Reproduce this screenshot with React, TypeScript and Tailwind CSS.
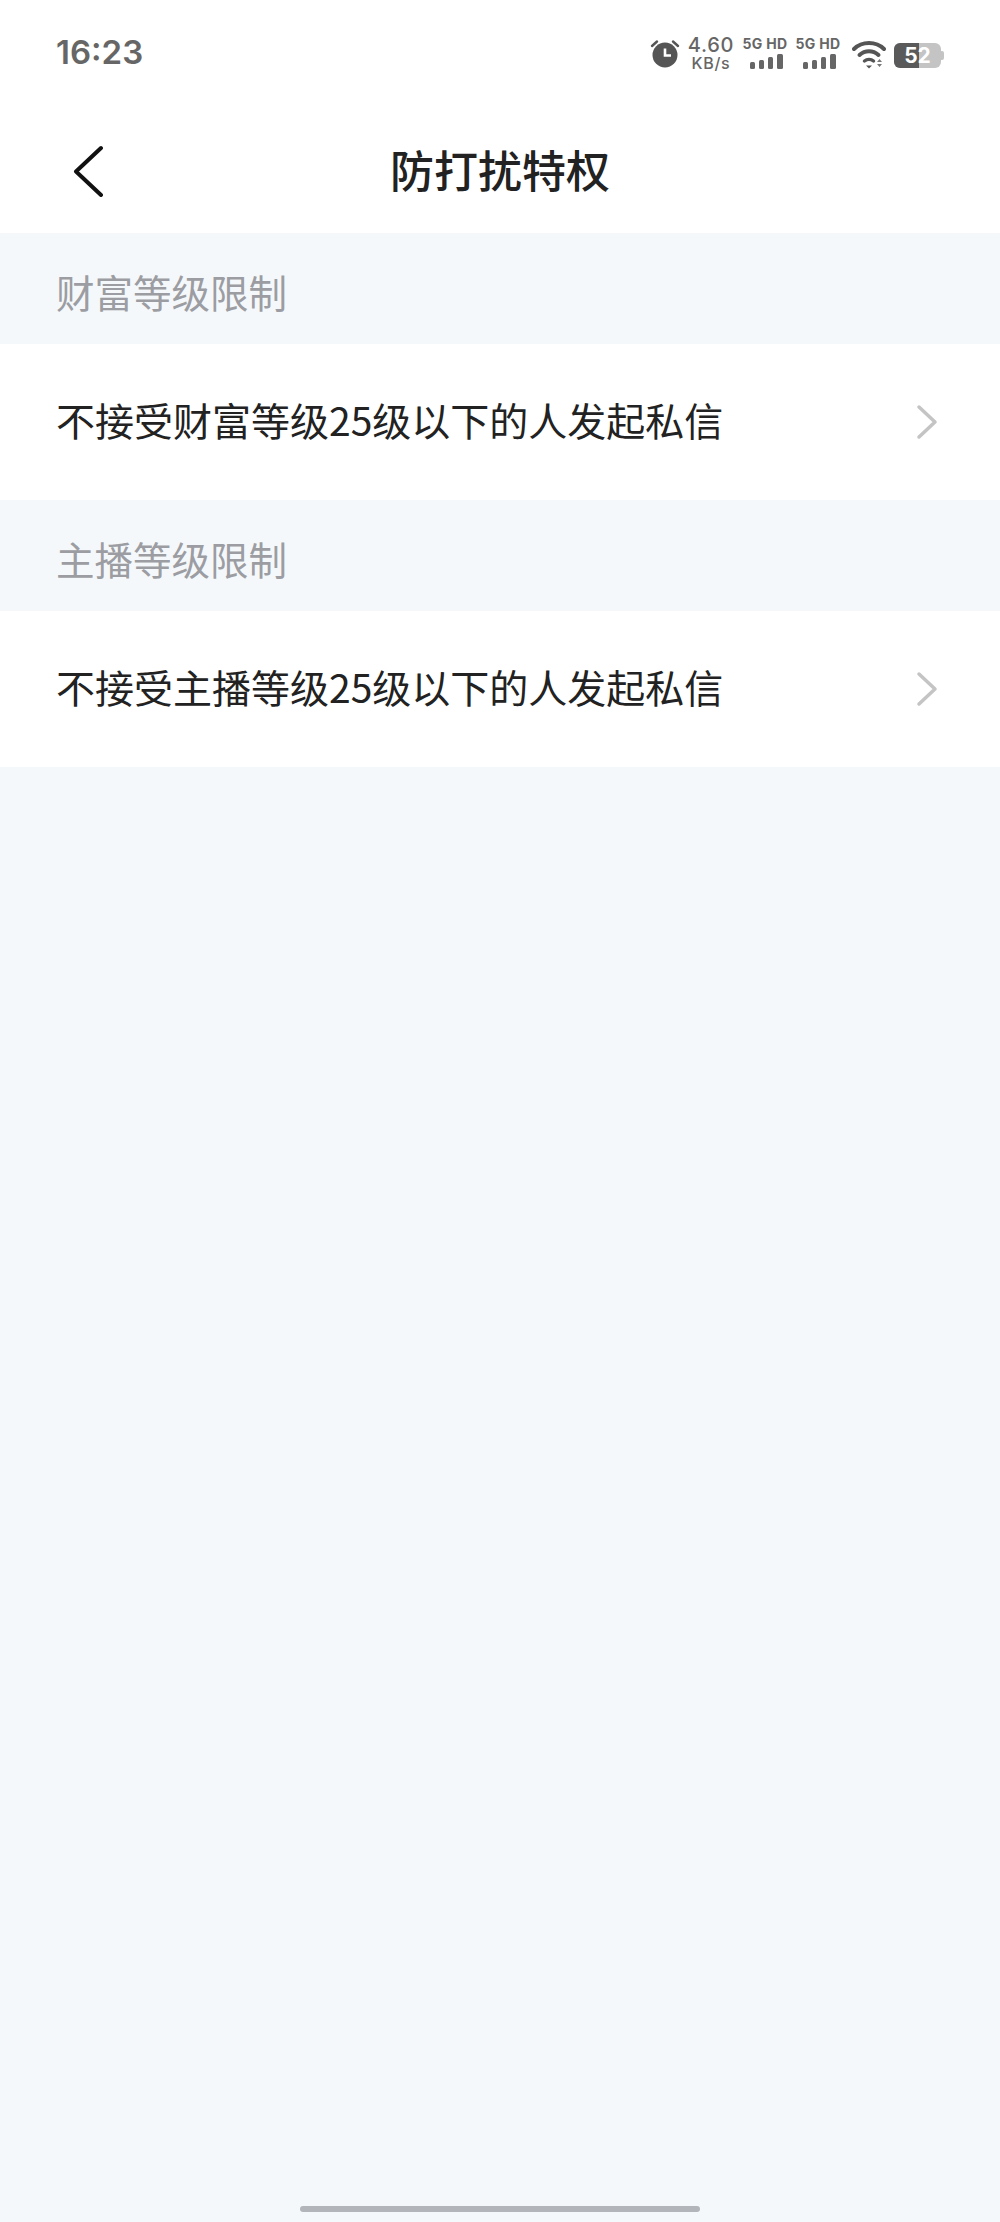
const FONT = 'font-["Noto_Sans_CJK_SC","Noto_Sans",sans-serif]';

function SignalIcon() {
  return (
    <svg width="34" height="17" viewBox="0 0 34 17" fill="#666">
      <rect x="0" y="9" width="5" height="7" rx="1.5" />
      <rect x="9" y="7" width="5" height="9" rx="1.5" />
      <rect x="18" y="4" width="5" height="12" rx="1.5" />
      <rect x="27" y="1" width="6" height="15" rx="1.5" />
    </svg>
  );
}

function Sim() {
  return (
    <div className="flex w-[46px] flex-col items-center pt-[3px]">
      <span className="text-[14px] leading-[14px] font-bold tracking-[0.3px] whitespace-nowrap text-[#666]">5G HD</span>
      <div className="mt-[2px] ml-[3px]">
        <SignalIcon />
      </div>
    </div>
  );
}

function StatusBar() {
  return (
    <div className={`flex h-[116px] items-start justify-between pt-[33px] pr-[56px] pl-[56px] ${FONT}`}>
      <span className='font-["Inter",sans-serif] text-[33px] leading-[38px] font-semibold text-[#666]'>16:23</span>
      <div className="flex items-start pt-[1px]" style={{ fontFamily: 'Inter, sans-serif' }}>
        <svg className="mt-[5px]" width="30" height="30" viewBox="0 0 30 30" fill="none">
          <circle cx="15" cy="16" r="12.5" fill="#555" />
          <path d="M15 9.5V16.5H21" stroke="#fff" strokeWidth="2.6" />
          <path d="M2 7L7 2.5M28 7L23 2.5" stroke="#555" strokeWidth="2.4" strokeLinecap="round" />
        </svg>
        <div className="ml-[7px] flex w-[48px] flex-col items-center pt-[1px] text-[#666]">
          <span className="text-[20px] leading-[20px] font-medium tracking-[0.7px]">4.60</span>
          <span className="text-[16px] leading-[16px] font-medium tracking-[0.7px]">KB/s</span>
        </div>
        <div className="ml-[7px] flex gap-[7px]">
          <Sim />
          <Sim />
        </div>
        <svg className="mt-[4px] ml-[11px]" width="34" height="32" viewBox="0 0 34 32" fill="none">
          <path d="M2 11C10 3 24 3 32 11" stroke="#555" strokeWidth="4" strokeLinecap="round" />
          <path d="M7.5 17C13 12 21 12 26.5 17" stroke="#555" strokeWidth="4" strokeLinecap="round" />
          <path d="M12.5 23C15 21 19 21 21.5 23" stroke="#555" strokeWidth="3.5" strokeLinecap="round" />
          <path d="M14 27.5L17 30.5L20 27.5Z" fill="#555" />
          <path d="M27.5 21L30 24H25Z M25 26H30L27.5 29Z" fill="#777" />
        </svg>
        <div className="relative mt-[9px] ml-[8px] flex h-[25px] w-[47px] overflow-hidden rounded-[6px] bg-[#c4c4c4]">
          <div className="h-full w-[25px] bg-[#5a5a5a]" />
          <span className="absolute inset-0 text-center text-[21px] leading-[25px] font-bold text-white">52</span>
        </div>
        <div className="mt-[17px] h-[9px] w-[3px] rounded-r-[2px] bg-[#c4c4c4]" />
      </div>
    </div>
  );
}

function Header() {
  return (
    <div className="relative flex h-[117px] items-center justify-center pb-[12px]">
      <svg className="absolute top-[29px] left-[72px]" width="32" height="52" viewBox="0 0 32 52" fill="none">
        <path d="M29 3L4 26.5L29 50" stroke="#111" strokeWidth="4" strokeLinecap="round" strokeLinejoin="round" />
      </svg>
      <h1 className={`text-[44px] leading-[60px] font-medium text-[#222] ${FONT}`}>防打扰特权</h1>
    </div>
  );
}

function LimitSection({ title, text }: { title: string; text: string }) {
  return (
    <div className={FONT}>
      <div className="flex h-[111px] items-center bg-[#f5f8fb] pt-[4px] pl-[56px]">
        <span className="text-[38.5px] leading-[52px] text-[#9c9da2]">{title}</span>
      </div>
      <div className="flex h-[156px] items-center justify-between bg-white pr-[62px] pl-[56px]">
        <span className="mb-[6px] text-[39px] leading-[52px] text-[#222]">{text}</span>
        <svg width="22" height="36" viewBox="0 0 22 36" fill="none">
          <path d="M3 3L19 18L3 33" stroke="#c4c4c4" strokeWidth="3.5" strokeLinecap="round" strokeLinejoin="round" />
        </svg>
      </div>
    </div>
  );
}

export default function App() {
  return (
    <div className="flex h-[2222px] w-[1000px] flex-col overflow-hidden bg-[#f5f8fb]">
      <div className="bg-white">
        <StatusBar />
        <Header />
      </div>
      <LimitSection title="财富等级限制" text="不接受财富等级25级以下的人发起私信" />
      <LimitSection title="主播等级限制" text="不接受主播等级25级以下的人发起私信" />
      <div className="mt-auto mb-[10px] flex justify-center">
        <div className="h-[6px] w-[400px] rounded-full bg-[#b2b6ba]" />
      </div>
    </div>
  );
}
